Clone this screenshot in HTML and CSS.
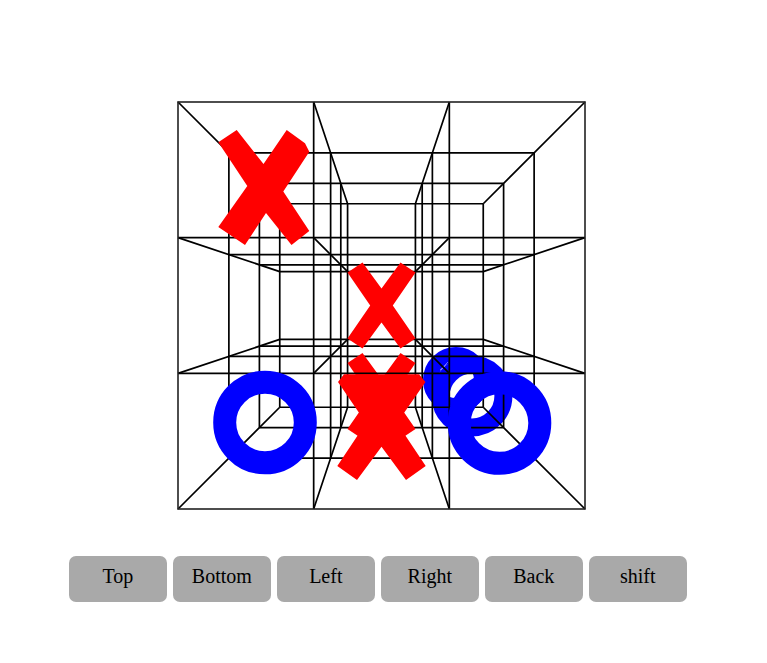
FILE: index.html
```html
<!DOCTYPE html>
<html lang="en">
<head>
  <meta charset="UTF-8">
  <title>3D Tic Tac Toe</title>
  <link rel="stylesheet" href="styles.css">
</head>
<body>
  <svg class="board" viewBox="0 0 767 540" role="img" aria-label="3D tic tac toe board">
    <!-- far marks sit behind the wire frame -->
    <circle class="mark-o mark-o-back" cx="456" cy="380" r="25.5"/>
    <circle class="mark-o mark-o-mid" cx="472" cy="396" r="31.4"/>
    <path class="seam" d="M440 370L448 362"/>

    <!-- layers, far to near -->
    <path class="wire" d="M279.75 203.75V407.25M347.58 203.75V407.25M415.42 203.75V407.25M483.25 203.75V407.25M279.75 203.75H483.25M279.75 271.58H483.25M279.75 339.42H483.25M279.75 407.25H483.25"/>
    <path class="wire" d="M259.4 183.4V427.6M340.8 183.4V427.6M422.2 183.4V427.6M503.6 183.4V427.6M259.4 183.4H503.6M259.4 264.8H503.6M259.4 346.2H503.6M259.4 427.6H503.6"/>
    <path class="wire" d="M228.88 152.88V458.13M330.63 152.88V458.13M432.38 152.88V458.13M534.13 152.88V458.13M228.88 152.88H534.13M228.88 254.63H534.13M228.88 356.38H534.13M228.88 458.13H534.13"/>

    <!-- depth lines -->
    <path class="wire" d="M178 102L279.75 203.75M313.67 102L347.58 203.75M449.33 102L415.42 203.75M585 102L483.25 203.75"/>
    <path class="wire" d="M178 237.67L279.75 271.58M313.67 237.67L347.58 271.58M449.33 237.67L415.42 271.58M585 237.67L483.25 271.58"/>
    <path class="wire" d="M178 373.33L279.75 339.42M313.67 373.33L347.58 339.42M449.33 373.33L415.42 339.42M585 373.33L483.25 339.42"/>
    <path class="wire" d="M178 509L279.75 407.25M313.67 509L347.58 407.25M449.33 509L415.42 407.25M585 509L483.25 407.25"/>

    <polygon class="mark-x" points="362.5,262.5 381.5,288.5 400.5,262.5 415.5,272.5 392.8,305.5 415.5,338.5 400.5,348.5 381.5,322.5 362.5,348.5 347.5,338.5 370.2,305.5 347.5,272.5"/>
    <polygon class="mark-x" points="362.5,353 381.5,379 400.5,353 415.5,363 392.8,396 415.5,429 400.5,439 381.5,413 362.5,439 347.5,429 370.2,396 347.5,363"/>

    <!-- near layer -->
    <path class="wire" d="M313.67 102V509M449.33 102V509M178 237.67H585M178 373.33H585"/>
    <rect class="frame" x="178" y="102" width="407" height="407"/>

    <polygon class="mark-x" points="236.7,130 263.5,164 286.7,130 305,143.3 309.3,151.7 283.3,191.5 309.3,231 291.5,245 266,213 245,245 218.3,227 247.3,186 218.3,142.3"/>
    <polygon class="mark-x" points="338,382 344,374.2 419,374.2 425.5,382 397,423 425.7,466 406,480 381.5,446.7 357,480 337.3,466 366,423"/>
    <circle class="mark-o" cx="265" cy="422.5" r="40.3"/>
    <circle class="mark-o" cx="499.5" cy="423" r="40.3"/>
  </svg>

  <div class="controls">
    <button class="btn" type="button">Top</button>
    <button class="btn" type="button">Bottom</button>
    <button class="btn" type="button">Left</button>
    <button class="btn" type="button">Right</button>
    <button class="btn" type="button">Back</button>
    <button class="btn" type="button">shift</button>
  </div>
</body>
</html>
```

FILE: styles.css
```css
body {
  margin: 0;
  background: #fff;
  font-family: "Liberation Serif", serif;
}

.board {
  display: block;
  width: 767px;
  height: 540px;
}

.wire {
  fill: none;
  stroke: #000;
  stroke-width: 1.7;
}

.frame {
  fill: none;
  stroke: #222;
  stroke-width: 1.6;
}

.mark-x {
  fill: #f00;
}

.mark-o {
  fill: none;
  stroke: #00f;
  stroke-width: 23;
}
.mark-o-mid { stroke-width: 18; }
.mark-o-back { stroke-width: 15; }

.seam {
  stroke: #6a6aff;
  stroke-width: 1;
}

.controls {
  display: flex;
  gap: 6.33px;
  margin-top: 16px;
  padding-left: 69px;
}

.btn {
  width: 97.67px;
  height: 46px;
  padding: 0 0 6px;
  border: 0;
  border-radius: 7px;
  background: #a9a9a9;
  color: #000;
  font-family: "Liberation Serif", serif;
  font-size: 20px;
  cursor: pointer;
}
```
